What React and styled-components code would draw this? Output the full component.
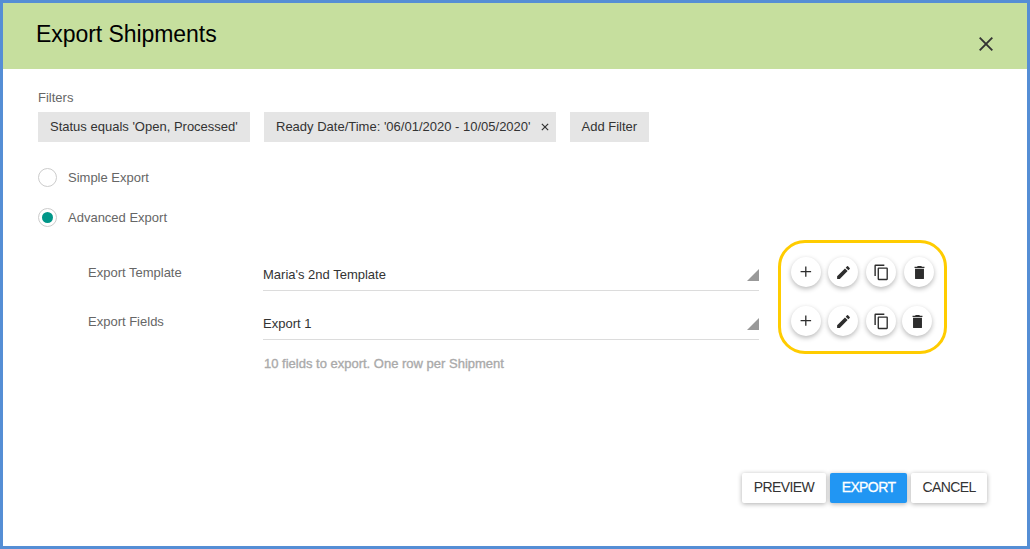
import React from "react";
import styled, { createGlobalStyle } from "styled-components";

const GlobalStyle = createGlobalStyle`
  * { box-sizing: border-box; }
  body { margin: 0; background: #fff; font-family: "Liberation Sans", Arial, sans-serif; font-size: 13px; color: #333; }
  button { font-family: inherit; cursor: pointer; border: 0; padding: 0; }
`;

const Dialog = styled.div`
  width: 1030px;
  height: 549px;
  border: 3px solid #558ed5;
  background: #fff;
  display: flex;
  flex-direction: column;
  overflow: hidden;
`;

const Header = styled.header`
  height: 66px;
  flex: none;
  background: #c6df9e;
  padding: 0 33px 0 33px;
  display: flex;
  justify-content: space-between;
`;

const Title = styled.h1`
  margin: 17px 0 0;
  font-size: 23px;
  line-height: 28px;
  font-weight: 400;
  letter-spacing: -0.06px;
  color: #000;
  white-space: nowrap;
`;

const CloseButton = styled.button`
  background: none;
  margin-top: 33px;
  width: 16px;
  height: 16px;
  color: #333;
  svg { display: block; }
`;

const Body = styled.main`
  flex: 1;
  padding: 20px 40px 43px 35px;
  display: flex;
  flex-direction: column;
`;

const Caption = styled.div`
  height: 23px;
  line-height: 17px;
  color: #666;
`;

const Chips = styled.div`
  display: flex;
  gap: 14px;
`;

const Chip = styled.button`
  width: ${(p) => p.$width}px;
  height: 30px;
  padding: 0 7px 1px ${(p) => p.$inset || 12}px;
  background: #e5e5e5;
  color: #333;
  font-size: 13px;
  white-space: nowrap;
  display: flex;
  align-items: center;
  justify-content: space-between;
`;

const RadioList = styled.div`
  margin-top: 25px;
  display: flex;
  flex-direction: column;
  gap: 20px;
`;

const RadioRow = styled.label`
  height: 20px;
  display: flex;
  align-items: center;
  gap: 11px;
  color: #666;
`;

const RadioMark = styled.span`
  width: 19px;
  height: 19px;
  border: 1px solid #ccc;
  border-radius: 50%;
  display: flex;
  align-items: center;
  justify-content: center;
  &::after {
    content: "";
    width: 11px;
    height: 11px;
    border-radius: 50%;
    background: ${(p) => (p.$checked ? "#009688" : "transparent")};
  }
`;

const Settings = styled.section`
  margin-top: 13px;
  padding-left: 50px;
  display: flex;
`;

const Fields = styled.div`
  width: 671px;
  padding-top: 11px;
`;

const FieldRow = styled.div`
  height: 49px;
  display: flex;
`;

const FieldLabel = styled.div`
  width: 175px;
  padding-top: 14px;
  line-height: 16px;
  color: #666;
`;

const Select = styled.div`
  flex: 1;
  height: 40px;
  padding-top: 7px;
  border-bottom: 1px solid #dcdcdc;
  display: flex;
  align-items: center;
  justify-content: space-between;
`;

const Corner = styled.span`
  width: 12px;
  height: 12px;
  background: #999;
  clip-path: polygon(100% 0, 100% 100%, 0 100%);
  margin-top: 2px;
`;

const Hint = styled.div`
  margin: 7px 0 0 176px;
  line-height: 16px;
  color: #aaa;
  -webkit-text-stroke: 0.35px #aaa;
`;

const ActionPanel = styled.div`
  width: 169px;
  height: 114px;
  margin-left: 19px;
  border: 3px solid #fc0;
  border-radius: 27px;
  padding: 14px 0 0 10px;
  display: flex;
  flex-direction: column;
  gap: 19px;
`;

const ActionRow = styled.div`
  display: flex;
  gap: 7px;
`;

const RoundButton = styled.button`
  width: 30px;
  height: 30px;
  flex: none;
  border-radius: 50%;
  background: #fff;
  color: #2d2d2d;
  box-shadow: 0 2px 5px rgba(0, 0, 0, 0.28);
  display: flex;
  align-items: center;
  justify-content: center;
  margin-left: ${(p) => p.$shift || 0}px;
`;

const Footer = styled.footer`
  margin-top: auto;
  display: flex;
  justify-content: flex-end;
  gap: 4px;
`;

const Button = styled.button`
  width: ${(p) => p.$width}px;
  height: 30px;
  padding-bottom: 2px;
  border-radius: 2px;
  background: ${(p) => (p.$primary ? "#2196f3" : "#fff")};
  color: ${(p) => (p.$primary ? "#fff" : "#333")};
  font-size: 14px;
  letter-spacing: -0.6px;
  -webkit-text-stroke: ${(p) => (p.$primary ? "0.3px #fff" : "0")};
  box-shadow: 0 1px 5px rgba(0, 0, 0, 0.32);
`;

const Cross = ({ size, width }) => (
  <svg width={size} height={size} viewBox="0 0 16 16" fill="none" stroke="currentColor" strokeWidth={width}>
    <path d="M1.7 1.7l12.6 12.6M14.3 1.7l-12.6 12.6" />
  </svg>
);

const icons = {
  Add: (
    <svg width="16" height="16" viewBox="0 0 16 16" stroke="currentColor" strokeWidth="1.3">
      <path d="M7.8 2.6v10.2M2.6 7.6h10.5" />
    </svg>
  ),
  Edit: (
    <svg width="17" height="17" viewBox="0 0 24 24" fill="currentColor">
      <path d="M3 17.25V21h3.75L17.81 9.94l-3.75-3.75L3 17.25zM20.71 7.04a1 1 0 0 0 0-1.41l-2.34-2.34a1 1 0 0 0-1.41 0l-1.83 1.83 3.75 3.75 1.83-1.83z" />
    </svg>
  ),
  Copy: (
    <svg width="17" height="17" viewBox="0 0 24 24" fill="currentColor">
      <path d="M16 .8H3.5A1.5 1.5 0 0 0 2 2.3V17h2V2.8h12V.8zm3.5 4H8a1.5 1.5 0 0 0-1.5 1.5v15A1.5 1.5 0 0 0 8 22.8h11.5a1.5 1.5 0 0 0 1.5-1.5v-15a1.5 1.5 0 0 0-1.5-1.5zm-.4 16H8.4v-14h10.7v14z" />
    </svg>
  ),
  Delete: (
    <svg width="17" height="17" viewBox="0 0 24 24" fill="currentColor">
      <path d="M5.7 20.3a1 1 0 0 0 1 1h10.6a1 1 0 0 0 1-1V6.8H5.7v13.5zM19 4h-3.5l-1-1.2h-5L8.500 4H5v1.700h14V4z" />
    </svg>
  ),
};

const Actions = ({ lastShift }) => (
  <ActionRow>
    {Object.entries(icons).map(([name, icon]) => (
      <RoundButton
        key={name}
        aria-label={name}
        $shift={name === "Delete" ? lastShift : name === "Copy" ? 1 : 0}
      >
        {icon}
      </RoundButton>
    ))}
  </ActionRow>
);

export default function App() {
  return (
    <>
      <GlobalStyle />
      <Dialog>
        <Header>
          <Title>Export Shipments</Title>
          <CloseButton aria-label="Close"><Cross size={16} width={1.9} /></CloseButton>
        </Header>
        <Body>
          <Caption>Filters</Caption>
          <Chips>
            <Chip $width={212}>Status equals 'Open, Processed'</Chip>
            <Chip $width={292}>
              Ready Date/Time: '06/01/2020 - 10/05/2020'
              <Cross size={8} width={2.4} />
            </Chip>
            <Chip $width={79} $inset={11.5}>Add Filter</Chip>
          </Chips>
          <RadioList>
            <RadioRow><RadioMark />Simple Export</RadioRow>
            <RadioRow><RadioMark $checked />Advanced Export</RadioRow>
          </RadioList>
          <Settings>
            <Fields>
              <FieldRow>
                <FieldLabel>Export Template</FieldLabel>
                <Select>Maria's 2nd Template<Corner /></Select>
              </FieldRow>
              <FieldRow>
                <FieldLabel>Export Fields</FieldLabel>
                <Select>Export 1<Corner /></Select>
              </FieldRow>
              <Hint>10 fields to export. One row per Shipment</Hint>
            </Fields>
            <ActionPanel>
              <Actions lastShift={1} />
              <Actions lastShift={-1} />
            </ActionPanel>
          </Settings>
          <Footer>
            <Button $width={84}>PREVIEW</Button>
            <Button $width={77} $primary>EXPORT</Button>
            <Button $width={76}>CANCEL</Button>
          </Footer>
        </Body>
      </Dialog>
    </>
  );
}
